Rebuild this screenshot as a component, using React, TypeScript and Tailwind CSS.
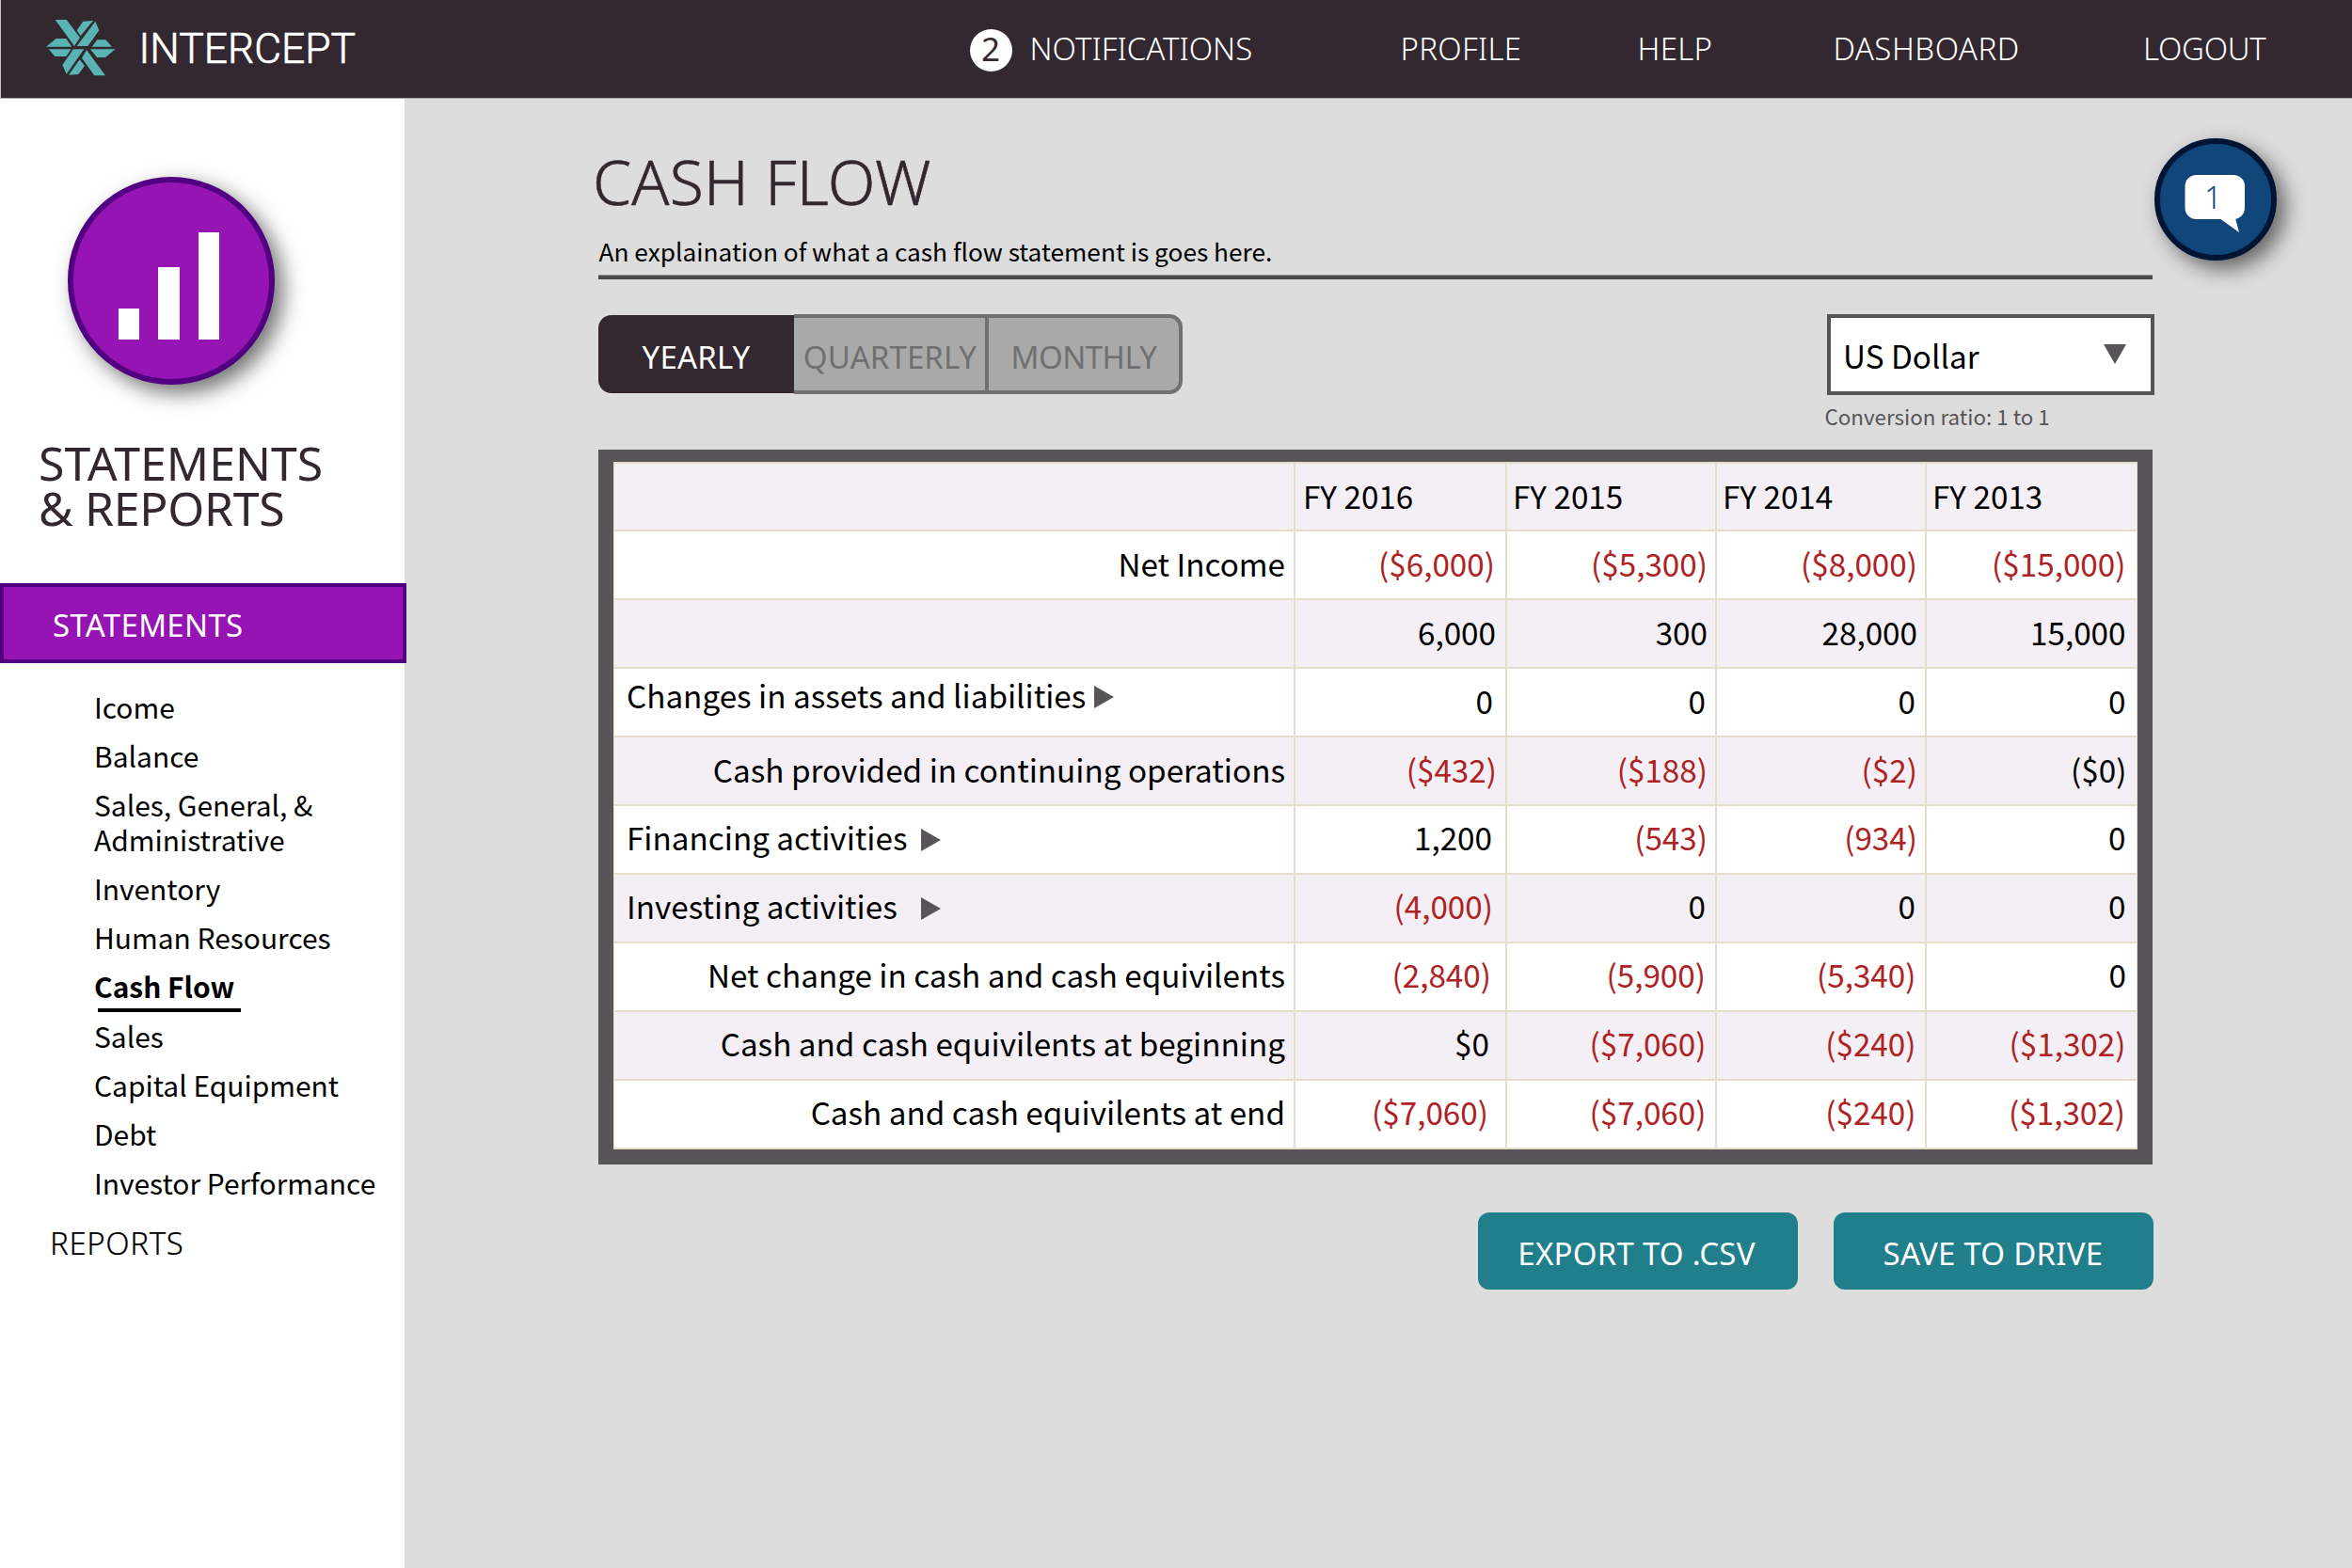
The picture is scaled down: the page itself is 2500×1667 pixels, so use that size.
import type { ReactNode } from 'react';

const heading = "font-['Noto_Sans','Open_Sans',sans-serif]";
const body = "font-['Noto_Sans_CJK_SC','Noto_Sans',sans-serif]";

function Logo() {
  return (
    <svg viewBox="0 0 270 240" className="ml-[39px] mt-[10px] h-[80px] w-[90px] shrink-0" fill="#5ab4b4">
      <polygon points="56,33 92,33 135,90 117,117" />
      <polygon points="145,38 177,36 137,85 125,67" />
      <polygon points="184,38 196,67 160,117 125,117" />
      <polygon points="27,119 59,93 91,93 109,119" />
      <polygon points="35,127 107,127 91,150 55,150" />
      <polygon points="190,97 217,97 237,119 173,119" />
      <polygon points="168,127 248,127 216,153 189,153" />
      <polygon points="114,127 148,127 92,206 79,177" />
      <polygon points="134,160 150,180 130,207 99,209" />
      <polygon points="156,129 216,211 181,211 141,155" />
    </svg>
  );
}

function Header() {
  return (
    <header className={`flex h-[105px] shrink-0 border-b border-l border-b-[#a9a4a9] border-l-[#c9c6c9] bg-[#332730] text-white ${heading}`}>
      <Logo />
      <span className="ml-[17.5px] w-[883px] shrink-0 font-['Roboto',sans-serif] text-[44.4px] font-light leading-[105px] [-webkit-text-stroke:0.7px_white]">INTERCEPT</span>
      <span className="mr-[19px] mt-[31px] h-[45px] w-[45px] shrink-0 rounded-full bg-white text-center text-[35px] leading-[41px] text-[#332730]">2</span>
      <nav className="grid grid-cols-[394px_252px_208px_329.5px_auto] text-[33px] font-light leading-[104px]">
        <a className="tracking-[0px]">NOTIFICATIONS</a>
        <a className="tracking-[0.3px]">PROFILE</a>
        <a className="tracking-[0.3px]">HELP</a>
        <a className="tracking-[0.5px]">DASHBOARD</a>
        <a className="tracking-[-0.3px]">LOGOUT</a>
      </nav>
    </header>
  );
}

const links = ['Icome', 'Balance', 'Sales, General, & Administrative', 'Inventory', 'Human Resources', 'Cash Flow', 'Sales', 'Capital Equipment', 'Debt', 'Investor Performance'];

function Sidebar() {
  return (
    <aside className="flex w-[430px] shrink-0 flex-col bg-white">
      <div className="ml-[72px] mt-[83px] h-[221px] w-[220px] rounded-full border-[6px] border-[#520082] bg-[#9614b4] shadow-[9px_9px_22px_rgba(0,0,0,0.55)]">
        <div className="ml-[48px] mt-[53px] flex h-[114px] items-end gap-[20px]">
          <div className="h-[33.5px] w-[22px] bg-white" />
          <div className="h-[77px] w-[22.5px] bg-white" />
          <div className="h-[114px] w-[22px] bg-white" />
        </div>
      </div>
      <h2 className={`ml-[41px] mt-[58.5px] text-[50px] leading-[48px] text-[#332730] ${heading}`}>
        <span className="block tracking-[0px]">STATEMENTS</span>
        <span className="block tracking-[-0.3px]">&amp; REPORTS</span>
      </h2>
      <div className={`mt-[56px] h-[85px] w-[432px] border-4 border-[#520082] bg-[#9614b4] pl-[52px] text-[33px] leading-[81px] tracking-[0.3px] text-white ${heading}`}>
        STATEMENTS
      </div>
      <ul className={`ml-[100px] mt-[28px] flex w-[310px] flex-col gap-[15.2px] text-[29.95px] leading-[37px] text-black ${body}`}>
        {links.map((l) =>
          l === 'Cash Flow' ? (
            <li key={l} className="relative font-bold">
              {l}
              <span className="absolute left-[3.5px] top-[42px] h-[4px] w-[152px] bg-black" />
            </li>
          ) : (
            <li key={l}>{l}</li>
          ),
        )}
      </ul>
      <div className={`ml-[53px] mt-[26px] text-[33px] font-light leading-[40px] tracking-[0.6px] text-black [-webkit-text-stroke:0.2px_black] ${heading}`}>REPORTS</div>
    </aside>
  );
}

function RightArrow({ className }: { className: string }) {
  return (
    <svg viewBox="0 0 21 24" className={`relative top-[2.5px] h-[24px] w-[21px] ${className}`} fill="#575558">
      <polygon points="0,0 21,12 0,24" />
    </svg>
  );
}

type Cell = [text: string, pad: string];
type Row = { label: ReactNode; cells: Cell[] };

const right = 'pr-[9px] text-right';
const left = 'flex items-center pl-[13px]';

const rows: Row[] = [
  { label: <div className={right}>Net Income</div>, cells: [['($6,000)', 'pr-[11px]'], ['($5,300)', 'pr-[8px]'], ['($8,000)', 'pr-[8px]'], ['($15,000)', 'pr-[11px]']] },
  { label: null, cells: [['6,000', 'pr-[10px]'], ['300', 'pr-[8px]'], ['28,000', 'pr-[8px]'], ['15,000', 'pr-[11px]']] },
  {
    label: <div className={`${left} leading-[56px]`}>Changes in assets and liabilities<RightArrow className="ml-[9px] mt-[-2px]" /></div>,
    cells: [['0', 'pr-[13px]'], ['0', 'pr-[10px]'], ['0', 'pr-[10px]'], ['0', 'pr-[11px]']],
  },
  { label: <div className={right}>Cash provided in continuing operations</div>, cells: [['($432)', 'pr-[9px]'], ['($188)', 'pr-[8px]'], ['($2)', 'pr-[8px]'], ['($0)', 'pr-[10px]']] },
  {
    label: <div className={left}>Financing activities<RightArrow className="ml-[14px]" /></div>,
    cells: [['1,200', 'pr-[14px]'], ['(543)', 'pr-[8px]'], ['(934)', 'pr-[8px]'], ['0', 'pr-[11px]']],
  },
  {
    label: <div className={left}>Investing activities<RightArrow className="ml-[25px]" /></div>,
    cells: [['(4,000)', 'pr-[13px]'], ['0', 'pr-[10px]'], ['0', 'pr-[10px]'], ['0', 'pr-[11px]']],
  },
  { label: <div className={right}>Net change in cash and cash equivilents</div>, cells: [['(2,840)', 'pr-[15px]'], ['(5,900)', 'pr-[10px]'], ['(5,340)', 'pr-[9.5px]'], ['0', 'pr-[10.5px]']] },
  { label: <div className={right}>Cash and cash equivilents at beginning</div>, cells: [['$0', 'pr-[17px]'], ['($7,060)', 'pr-[9.5px]'], ['($240)', 'pr-[9.5px]'], ['($1,302)', 'pr-[11px]']] },
  { label: <div className={right}>Cash and cash equivilents at end</div>, cells: [['($7,060)', 'pr-[18px]'], ['($7,060)', 'pr-[9.5px]'], ['($240)', 'pr-[9.5px]'], ['($1,302)', 'pr-[11.5px]']] },
];

const rowGrid = 'grid grid-cols-[722px_225px_223px_223px_1fr] border-t-2 border-[#e5deca]';

function isNegative(text: string) {
  return text.startsWith('(') && text !== '($0)';
}

function CashTable() {
  return (
    <div className={`h-[760px] border-x-[16px] border-b-[16px] border-t-[13px] border-[#575558] text-[33.25px] text-black ${body}`}>
      <div className="h-[731px] border-x border-b-2 border-[#e5deca] bg-white">
        <div className={`h-[72px] bg-[#f3eff5] leading-[68px] ${rowGrid}`}>
          <div />
          <div className="border-l-2 border-[#e5deca] pl-[8px]">FY 2016</div>
          <div className="border-l-2 border-[#e5deca] pl-[6px]">FY 2015</div>
          <div className="border-l-2 border-[#e5deca] pl-[6px]">FY 2014</div>
          <div className="border-l-2 border-[#e5deca] pl-[6px]">FY 2013</div>
        </div>
        {rows.map((r, i) => (
          <div key={i} className={`h-[73px] ${rowGrid} ${i % 2 ? 'bg-[#f3eff5]' : 'bg-white'} ${i < 4 ? 'leading-[68px]' : 'leading-[66px]'}`}>
            <div>{r.label}</div>
            {r.cells.map(([text, pad], j) => (
              <div key={j} className={`border-l-2 border-[#e5deca] text-right ${pad} ${isNegative(text) ? 'text-[#ae2224]' : ''}`}>{text}</div>
            ))}
          </div>
        ))}
      </div>
    </div>
  );
}

function PeriodTabs() {
  return (
    <div className={`flex text-[33px] ${heading}`}>
      <div className="mt-px h-[83px] w-[208px] rounded-l-[14px] bg-[#332730] text-center leading-[90px] tracking-[0.2px] text-white">YEARLY</div>
      <div className="h-[85px] w-[203px] border-y-4 border-[#707070] bg-[#a9a9a9] pl-px text-center leading-[84px] tracking-[0.1px] text-[#707070]">QUARTERLY</div>
      <div className="h-[85px] w-[210px] rounded-r-[14px] border-4 border-[#707070] bg-[#a9a9a9] text-center leading-[84px] tracking-[-0.5px] text-[#707070]">MONTHLY</div>
    </div>
  );
}

function Currency() {
  return (
    <div className={`mr-[-2px] w-[348px] ${body}`}>
      <div className="flex h-[86px] items-start justify-between border-4 border-[#575558] bg-white pl-[13.5px] pr-[26px] text-[33.3px] leading-[80px] text-black">
        US Dollar
        <svg viewBox="0 0 24 21" className="mt-[28px] h-[21px] w-[24px]" fill="#575558">
          <polygon points="0,0 24,0 12,21" />
        </svg>
      </div>
      <div className="ml-[-2px] mt-[7px] text-[22.4px] leading-[30px] text-[#575558]">Conversion ratio: 1 to 1</div>
    </div>
  );
}

function ChatButton() {
  return (
    <button className="absolute left-[2290px] top-[147px] h-[130px] w-[130px] rounded-full border-[6px] border-[#001433] bg-[#10467a] shadow-[9px_9px_22px_rgba(0,0,0,0.55)]">
      <svg viewBox="0 0 118 118" className="h-[118px] w-[118px]">
        <rect x="26.5" y="33" width="63.5" height="47" rx="12" fill="#fff" />
        <polygon points="63,79 80,79 84,94" fill="#fff" />
        <text x="47" y="69" fontSize="33" fill="#10467a" className={`font-light ${heading}`}>1</text>
      </svg>
    </button>
  );
}

export default function App() {
  return (
    <div className="relative flex h-[1667px] w-[2500px] flex-col overflow-hidden bg-[#dddddd]">
      <Header />
      <div className="flex flex-1">
        <Sidebar />
        <main className="ml-[206px] w-[1651.5px] pt-[47px]">
          <h1 className={`ml-[-6px] text-[66px] font-light leading-[80px] tracking-[0.2px] text-[#332730] [-webkit-text-stroke:0.6px_#332730] ${heading}`}>CASH FLOW</h1>
          <p className={`ml-[0.5px] mt-[16px] text-[26.25px] leading-[38px] text-black ${body}`}>An explaination of what a cash flow statement is goes here.</p>
          <div className="mt-[6px] h-[5px] border-t border-[#8d8d8d] bg-[#4a4a4a]" />
          <div className="mt-[37px] flex h-[144px] items-start justify-between">
            <PeriodTabs />
            <Currency />
          </div>
          <CashTable />
          <div className={`mr-[-1.5px] mt-[51px] flex justify-end gap-[38px] text-center text-[33px] text-white ${heading}`}>
            <button className="h-[82px] w-[340px] rounded-[12px] bg-[#207f8b] pr-[3px] leading-[88px] tracking-[0.25px]">EXPORT TO .CSV</button>
            <button className="h-[82px] w-[340px] rounded-[12px] bg-[#207f8b] pr-[1px] leading-[88px] tracking-[0.25px]">SAVE TO DRIVE</button>
          </div>
        </main>
      </div>
      <ChatButton />
    </div>
  );
}
